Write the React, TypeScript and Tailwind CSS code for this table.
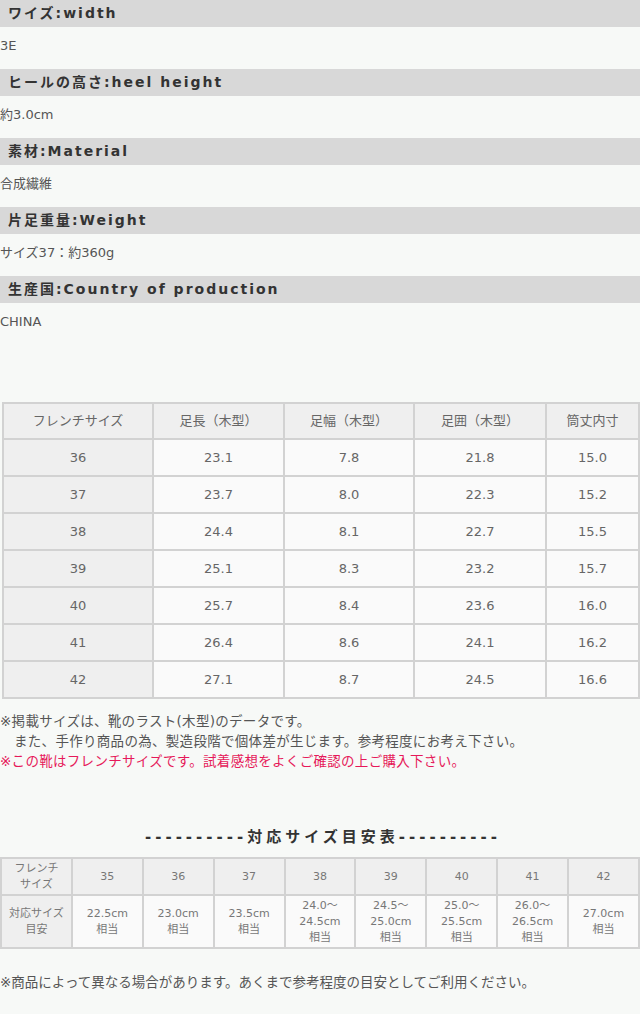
const specs = [
  { label: 'ワイズ:width', value: '3E' },
  { label: 'ヒールの高さ:heel height', value: '約3.0cm' },
  { label: '素材:Material', value: '合成繊維' },
  { label: '片足重量:Weight', value: 'サイズ37：約360g' },
  { label: '生産国:Country of production', value: 'CHINA' },
]

const sizeRows = [
  ['36', '23.1', '7.8', '21.8', '15.0'],
  ['37', '23.7', '8.0', '22.3', '15.2'],
  ['38', '24.4', '8.1', '22.7', '15.5'],
  ['39', '25.1', '8.3', '23.2', '15.7'],
  ['40', '25.7', '8.4', '23.6', '16.0'],
  ['41', '26.4', '8.6', '24.1', '16.2'],
  ['42', '27.1', '8.7', '24.5', '16.6'],
]

const guide = [
  { fr: '35', jp: ['22.5cm', '相当'] },
  { fr: '36', jp: ['23.0cm', '相当'] },
  { fr: '37', jp: ['23.5cm', '相当'] },
  { fr: '38', jp: ['24.0～', '24.5cm', '相当'] },
  { fr: '39', jp: ['24.5～', '25.0cm', '相当'] },
  { fr: '40', jp: ['25.0～', '25.5cm', '相当'] },
  { fr: '41', jp: ['26.0～', '26.5cm', '相当'] },
  { fr: '42', jp: ['27.0cm', '相当'] },
]

const font = 'font-["DejaVu_Sans","Noto_Sans_CJK_JP",sans-serif]'
const cell = 'border-2 border-[#d2d2d2] text-center align-middle'

export default function App() {
  return (
    <div className={`min-h-[1014px] w-[640px] bg-[#f7f9f7] text-[#555] ${font}`}>
      {/* spec rows */}
      {specs.map((s) => (
        <div key={s.label}>
          <div className="flex h-[27px] items-center bg-[#d8d8d8] pl-[8px] text-[14px] font-bold tracking-[2px] text-[#333]">
            {s.label}
          </div>
          <div className="h-[42px] pt-[9px] text-[13px] leading-[20px]">{s.value}</div>
        </div>
      ))}

      {/* size table */}
      <div className="pt-[57px] pl-[2px]">
        <table className="w-[636px] table-fixed border-collapse text-[13px] text-[#666]">
          <colgroup>
            <col className="w-[150px]" />
            <col className="w-[131px]" />
            <col className="w-[130px]" />
            <col className="w-[132px]" />
            <col className="w-[93px]" />
          </colgroup>
          <thead>
            <tr className="h-[36px] bg-[#efefef]">
              {['フレンチサイズ', '足長（木型）', '足幅（木型）', '足囲（木型）', '筒丈内寸'].map((h) => (
                <th key={h} className={`${cell} font-normal`}>{h}</th>
              ))}
            </tr>
          </thead>
          <tbody>
            {sizeRows.map((r) => (
              <tr key={r[0]} className="h-[37px]">
                {r.map((v, i) => (
                  <td key={i} className={`${cell} ${i === 0 ? 'bg-[#efefef]' : 'bg-[#fafafa]'}`}>{v}</td>
                ))}
              </tr>
            ))}
          </tbody>
        </table>
      </div>

      {/* notes */}
      <div className="pt-[12px] text-[13.5px] leading-[20px] tracking-[0.3px]">
        <p>※掲載サイズは、靴のラスト(木型)のデータです。</p>
        <p className="pl-[14px]">また、手作り商品の為、製造段階で個体差が生じます。参考程度にお考え下さい。</p>
        <p className="text-[#e6195a]">※この靴はフレンチサイズです。試着感想をよくご確認の上ご購入下さい。</p>
      </div>

      {/* guide title */}
      <div className="pt-[56px] pl-[6px] text-center text-[15px] leading-[20px] font-bold tracking-[4px] text-[#333]">
        ----------対応サイズ目安表----------
      </div>

      {/* guide table */}
      <div className="pt-[10px]">
        <table className="w-[640px] table-fixed border-collapse text-[11px] leading-[16px] text-[#777]">
          <tbody>
            <tr className="h-[37px] bg-[#efefef]">
              <td className={cell}>
                フレンチ
                <br />
                サイズ
              </td>
              {guide.map((g) => (
                <td key={g.fr} className={cell}>{g.fr}</td>
              ))}
            </tr>
            <tr className="h-[53px]">
              <td className={`${cell} bg-[#efefef]`}>
                対応サイズ
                <br />
                目安
              </td>
              {guide.map((g) => (
                <td key={g.fr} className={`${cell} bg-[#fafafa]`}>
                  {g.jp.map((l) => (
                    <div key={l}>{l}</div>
                  ))}
                </td>
              ))}
            </tr>
          </tbody>
        </table>
      </div>

      {/* footer note */}
      <p className="pt-[23px] text-[13.5px] leading-[20px]">
        ※商品によって異なる場合があります。あくまで参考程度の目安としてご利用ください。
      </p>
    </div>
  )
}
